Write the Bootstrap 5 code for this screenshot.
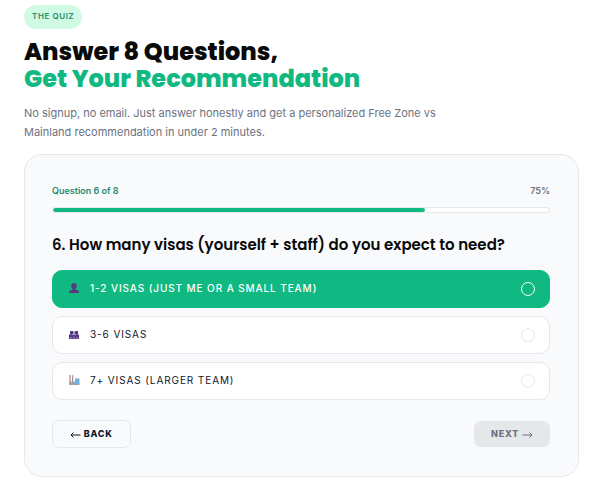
<!DOCTYPE html>
<html lang="en">
<head>
<meta charset="utf-8">
<meta name="viewport" content="width=device-width, initial-scale=1">
<title>The Quiz</title>
<link href="https://cdn.jsdelivr.net/npm/bootstrap@5.3.0/dist/css/bootstrap.min.css" rel="stylesheet">
<style>
  :root { --brand: #10b981; --brand-dark: #258a6c; --line: #e5e7eb; --ink: #0a0a0a; }
  body { font-family: Inter, "Liberation Sans", sans-serif; color: var(--ink); font-size: 11px; }
  .quiz-page { padding: 5px 12px 10px 24px; }
  .quiz-tag { background: #d1fae5; color: var(--brand-dark); font-size: 8px; line-height: 12px; font-weight: 600; letter-spacing: 0.6px; padding: 5px 8px 7px; }
  .quiz-title { font-family: Poppins, Inter, sans-serif; font-size: 24px; line-height: 27px; font-weight: 800; margin: 9px 0 12px; }
  .quiz-title span { color: var(--brand); }
  .quiz-intro { max-width: 440px; font-size: 11px; line-height: 19px; color: #6b7280; margin-bottom: 12px; }
  .quiz-card { background: #f9fafc; border: 1px solid var(--line); border-radius: 18px; padding: 29px 28px 28px 27px; }
  .quiz-status { font-size: 9px; line-height: 14px; font-weight: 600; color: #6b7280; }
  .quiz-status .step-label { color: var(--brand-dark); }
  .quiz-progress { height: 6px; background: #fff; border: 1px solid var(--line); margin: 9px 0 22px; }
  .quiz-progress .progress-bar { background: var(--brand); border-radius: 4px; }
  .quiz-question { font-family: Poppins, Inter, sans-serif; font-size: 15px; line-height: 20px; font-weight: 600; margin-bottom: 15px; float: none; }
  .quiz-option { min-height: 38px; padding: 0 14px 0 15px; background: #fff; border: 1px solid var(--line); border-radius: 10px; font-size: 10px; line-height: 16px; letter-spacing: 0.9px; color: #0f172a; cursor: pointer; }
  .quiz-option span { padding-bottom: 2px; }
  .quiz-option:has(:checked) { background: var(--brand); border-color: var(--brand); color: #fff; font-weight: 500; }
  .quiz-option svg { width: 12px; height: 12px; margin-right: 10px; margin-bottom: 2px; }
  .quiz-option .form-check-input { width: 14px; height: 14px; margin: 0; background: none; border: 1px solid var(--line); box-shadow: none; }
  .quiz-option .form-check-input:checked { border-color: #fff; }
  .quiz-btn { font-size: 9px; line-height: 14px; font-weight: 800; letter-spacing: 0.8px; border-radius: 7px; padding: 6px 17px; color: #0f172a; border: 1px solid var(--line); }
  .quiz-btn:disabled { background: var(--line); color: #6b7280; border: 0; opacity: 1; }
  .quiz-btn svg { width: 11px; height: 8px; }
</style>
<script src="https://cdn.jsdelivr.net/npm/bootstrap@5.3.0/dist/js/bootstrap.bundle.min.js" defer></script>
</head>
<body class="bg-white">
<main class="quiz-page">
  <div class="d-flex"><span class="quiz-tag rounded-pill">THE QUIZ</span></div>
  <h1 class="quiz-title">Answer 8 Questions,<br><span>Get Your Recommendation</span></h1>
  <p class="quiz-intro">No signup, no email. Just answer honestly and get a personalized Free Zone vs Mainland recommendation in under 2 minutes.</p>

  <form class="quiz-card">
    <div class="quiz-status d-flex justify-content-between">
      <span class="step-label">Question 6 of 8</span><span>75%</span>
    </div>
    <div class="quiz-progress progress rounded-pill" role="progressbar" aria-label="Quiz progress" aria-valuenow="75" aria-valuemin="0" aria-valuemax="100">
      <div class="progress-bar" style="width: 75%"></div>
    </div>

    <fieldset>
      <legend class="quiz-question">6. How many visas (yourself + staff) do you expect to need?</legend>
      <div class="d-grid gap-2">
        <label class="quiz-option d-flex align-items-center" for="visas-small">
          <svg viewBox="0 0 12 12" aria-hidden="true"><path fill="#563b82" d="M6 1C4.300 1 3.200 2 3.200 3.800c0 1.500.6 2.500 1.500 3v.7L2 8.500c-.8.300-1 1-1 2.500h10c0-1.500-.2-2.200-1-2.500L7.300 7.500v-.7c.9-.5 1.500-1.500 1.500-3C8.800 2 7.700 1 6 1z"/></svg>
          <span>1-2 VISAS (JUST ME OR A SMALL TEAM)</span>
          <input class="form-check-input ms-auto" type="radio" name="visas" id="visas-small" checked>
        </label>
        <label class="quiz-option d-flex align-items-center" for="visas-medium">
          <svg viewBox="0 0 12 12" aria-hidden="true"><path fill="#563b82" d="M2 3h3.300v3H2zM6.700 3H10v3H6.700zM1 7h10v4H1zM3 5.500h1.500V8H3zM7.500 5.500H9V8H7.500z"/><path fill="#8f7bb5" d="M5.300 4h1.400v3H5.300zM1 6h2v1H1zM9 6h2v1H9z"/><path stroke="#b7a8d4" stroke-width=".8" d="M3 9v2M6 8.500V11M9 9v2"/></svg>
          <span>3-6 VISAS</span>
          <input class="form-check-input ms-auto" type="radio" name="visas" id="visas-medium">
        </label>
        <label class="quiz-option d-flex align-items-center" for="visas-large">
          <svg viewBox="0 0 12 12" aria-hidden="true"><path fill="#a58a98" d="M1.500 1h1.200v8H1.500zM4 1h1.200v8H4z"/><path fill="#d9a4a8" d="M1.500 1h1.200v2H1.500zM4 1h1.200v2H4z"/><path fill="#a5a1ad" d="M1 7l2 1 2-1 2 1v3H1z"/><path fill="#8fa3b8" d="M7 4.500h4.500V11H7z"/><path fill="#69b7f0" d="M7.800 5.500h3V10h-3z"/></svg>
          <span>7+ VISAS (LARGER TEAM)</span>
          <input class="form-check-input ms-auto" type="radio" name="visas" id="visas-large">
        </label>
      </div>
    </fieldset>

    <div class="d-flex justify-content-between align-items-center quiz-actions mt-3 pt-1">
      <button type="button" class="btn quiz-btn"><svg viewBox="0 0 11 8" fill="none" stroke="currentColor" aria-hidden="true"><path d="M10.500 4H1M3.500 1.500L1 4l2.500 2.500"/></svg> BACK</button>
      <button type="submit" class="btn quiz-btn" disabled>NEXT <svg viewBox="0 0 11 8" fill="none" stroke="currentColor" aria-hidden="true"><path d="M.5 4H10M7.500 1.500L10 4 7.500 6.500"/></svg></button>
    </div>
  </form>
</main>
</body>
</html>
